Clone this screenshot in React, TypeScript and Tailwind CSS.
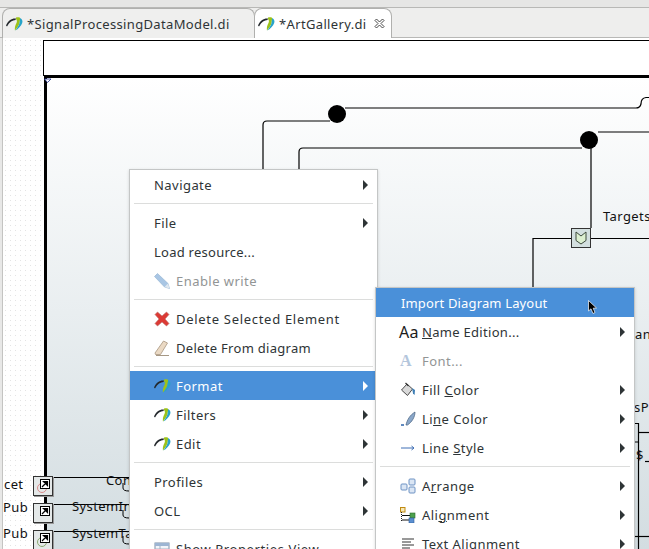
import React from 'react';

const PapyrusLogo = ({ className = '' }: { className?: string }) => (
  <svg viewBox="0 0 17 14" className={className}>
    <path d="M0 8.500 C2 3.500 6 1 10 1.500 L9.500 3 C6.500 3 3.500 5 1 9.500 Z" fill="#23282c" />
    <path d="M10 0.600 C12 -0.200 14 0.100 14.200 1 L13.500 6 C12.800 9 10.800 11 9 13.600 C8.400 11 9.400 8 10.500 6 C11.200 4.500 11 3 10 2 Z" fill="#9cc21a" />
    <path d="M14.200 1 C16.200 2 16.900 4 16.200 6 C15.200 9 12.200 12 9.300 13.600 C11 11 13 8.500 13.500 6 Z" fill="#27a3c9" />
  </svg>
);

const SubArrow = ({ white }: { white?: boolean }) => (
  <svg viewBox="0 0 5 10" className="w-[5px] h-[10px] shrink-0 -mt-[2px]">
    <path d="M0 0 L5 5 L0 10 Z" fill={white ? '#ffffff' : '#2e3436'} />
  </svg>
);

const icons: Record<string, React.ReactNode> = {
  pencil: (
    <svg viewBox="0 0 16 16" className="w-4 h-4">
      <path d="M0.500 3.500 L3.500 0.500 L14 10.500 L15.500 15.500 L10.500 14 Z" fill="#a9c6e4" stroke="#8fb0d0" strokeWidth="0.6" />
      <path d="M10.500 14 L15.500 15.500 L14 10.500 Z" fill="#dfe7ef" />
    </svg>
  ),
  cross: (
    <svg viewBox="0 0 16 16" className="w-4 h-4">
      <path d="M1 3.500 L3.500 1 L8 5 L12.500 1 L15 3.500 L11 8 L15 12.500 L12.500 15 L8 11 L3.500 15 L1 12.500 L5 8 Z" fill="#dc3a35" stroke="#b9706c" strokeWidth="0.6" />
    </svg>
  ),
  eraser: (
    <svg viewBox="0 0 16 16" className="w-4 h-4">
      <path d="M1 13 L9.500 1 L13.500 3 L6.500 14.500 L1.500 14.500 Z" fill="#ead9c4" stroke="#a8957f" strokeWidth="0.8" />
      <path d="M2 15.500 L15 15.500" stroke="#8f7d66" strokeWidth="0.8" />
    </svg>
  ),
  aa: <span className="text-[16px] leading-none text-[#1c1c1c] -ml-[1px]">Aa</span>,
  font: <span className="font-['Liberation_Serif',serif] font-bold text-[16px] leading-none text-[#b4c6dc]">A</span>,
  fill: (
    <svg viewBox="0 0 16 16" className="w-4 h-4">
      <path d="M1.500 8 L7 2 L12.500 7 L7.500 13.500 Z" fill="#d9d9d9" stroke="#4a4a4a" strokeWidth="1" />
      <path d="M5.500 1 L8.500 4" stroke="#333" strokeWidth="1.2" />
      <path d="M12 6 L15 8 L14.600 13 L13 11.500 Z" fill="#3f7fb5" />
    </svg>
  ),
  line: (
    <svg viewBox="0 0 17 16" className="w-[17px] h-4">
      <path d="M1 14 L4 14" stroke="#3a6db0" strokeWidth="1.6" />
      <path d="M6 14 C7 9 10 4 15 1 C15 6 12 11 7.500 14 Z" fill="#8aa7c9" stroke="#47617f" strokeWidth="0.7" />
    </svg>
  ),
  arrow: (
    <svg viewBox="0 0 16 16" className="w-4 h-4">
      <path d="M1 8 L14 8 M11.500 6 L14 8 L11.500 10" stroke="#3f6fb5" strokeWidth="1" fill="none" />
    </svg>
  ),
  arrange: (
    <svg viewBox="0 0 16 16" className="w-4 h-4">
      <rect x="1" y="6" width="6" height="6" rx="1" fill="#dbe6f4" stroke="#6e93c4" />
      <rect x="9" y="1" width="6" height="6" rx="1" fill="#dbe6f4" stroke="#6e93c4" />
      <rect x="9" y="9" width="6" height="6" rx="1" fill="#dbe6f4" stroke="#6e93c4" />
    </svg>
  ),
  align: (
    <svg viewBox="0 0 16 16" className="w-4 h-4">
      <rect x="0.500" y="0.500" width="4.500" height="4.500" fill="#f7e8b5" stroke="#c08a12" />
      <path d="M1.500 5 L1.500 15" stroke="#222" strokeWidth="1" strokeDasharray="1 1" />
      <path d="M2 8.500 L10 8.500 M2 13 L10 13" stroke="#111" strokeWidth="1" />
      <rect x="10" y="6" width="5" height="5" fill="#4da04d" stroke="#2c6e2c" strokeWidth="0.6" />
      <rect x="9" y="11" width="5" height="5" fill="#5a8fd0" stroke="#2f5f9c" strokeWidth="0.6" />
    </svg>
  ),
  text: (
    <svg viewBox="0 0 16 16" className="w-4 h-4">
      <path d="M2 3 H14 M2 6 H11 M2 9 H14 M2 12 H10 M2 15 H14" stroke="#333" strokeWidth="1" />
    </svg>
  ),
  table: (
    <svg viewBox="0 0 16 16" className="w-4 h-4">
      <rect x="1" y="2" width="14" height="12" fill="#f2f5fa" stroke="#7d8fa8" />
      <rect x="1" y="2" width="14" height="3" fill="#9db5d3" />
      <path d="M1 8 H15 M1 11 H15 M6 5 V14" stroke="#a4b2c4" strokeWidth="1" />
    </svg>
  ),
  logo: <PapyrusLogo className="w-[17px] h-[14px]" />,
};

type MenuItem = {
  label?: React.ReactNode;
  icon?: string;
  sub?: boolean;
  active?: boolean;
  disabled?: boolean;
  sep?: boolean;
  track?: string;
};

const mainMenu: MenuItem[] = [
  { label: 'Navigate', sub: true },
  { sep: true },
  { label: 'File', sub: true },
  { label: 'Load resource...', track: 'tracking-[0.25px]' },
  { label: 'Enable write', icon: 'pencil', disabled: true },
  { sep: true },
  { label: 'Delete Selected Element', icon: 'cross', track: 'tracking-[0.7px]' },
  { label: 'Delete From diagram', icon: 'eraser', track: 'tracking-[0.3px]' },
  { sep: true },
  { label: 'Format', icon: 'logo', sub: true, active: true },
  { label: 'Filters', icon: 'logo', sub: true },
  { label: 'Edit', icon: 'logo', sub: true },
  { sep: true },
  { label: 'Profiles', sub: true },
  { label: 'OCL', sub: true },
  { sep: true },
  { label: 'Show Properties View', icon: 'table', track: 'tracking-[0.6px]' },
];

const subMenu: MenuItem[] = [
  { label: <span className="ml-[1px]">Import Diagram Layout</span>, active: true, track: 'tracking-[0.15px]' },
  { label: <><u>N</u>ame Edition...</>, icon: 'aa', sub: true, track: 'tracking-[0.3px]' },
  { label: 'Font...', icon: 'font', disabled: true },
  { label: <>Fill <u>C</u>olor</>, icon: 'fill', sub: true },
  { label: <>Li<u>n</u>e Color</>, icon: 'line', sub: true },
  { label: <>Line <u>S</u>tyle</>, icon: 'arrow', sub: true },
  { sep: true },
  { label: <>A<u>r</u>range</>, icon: 'arrange', sub: true },
  { label: <>Ali<u>g</u>nment</>, icon: 'align', sub: true },
  { label: 'Text Alignment', icon: 'text', sub: true },
];

function Menu({ items, className }: { items: MenuItem[]; className: string }) {
  return (
    <div className={`absolute bg-white border border-[#c4c6c6] shadow-[0_1px_3px_rgba(0,0,0,0.15)] ${className}`}>
      {items.map((item, i) =>
        item.sep ? (
          <div key={i} className="h-[1px] my-1 mx-[4px] bg-[#dcdddc]" />
        ) : (
          <div
            key={i}
            className={`h-[29px] pt-[2px] flex items-center text-[13px] pl-[24px] pr-[9px] ${item.track ?? 'tracking-[0.45px]'} ${
              item.active ? 'bg-[#4a90d9] text-white' : item.disabled ? 'text-[#929595]' : 'text-[#2e3436]'
            }`}
          >
            {item.icon && <span className="w-[22px] flex items-center shrink-0 -mt-[2px]">{icons[item.icon]}</span>}
            <span className="flex-1 whitespace-nowrap">{item.label}</span>
            {item.sub && <SubArrow white={item.active} />}
          </div>
        )
      )}
    </div>
  );
}

function Tab({ label, active }: { label: string; active?: boolean }) {
  return (
    <div
      className={`flex items-center gap-[4px] h-[30px] border-t border-l border-r border-[#b0b0ae] rounded-t-[8px] ${
        active ? 'w-[138px] pl-[3px] pr-[6px] bg-white -ml-[1px]' : 'w-[253px] pl-[3px] bg-[#efefee]'
      }`}
    >
      <PapyrusLogo className="w-[17px] h-[14px] shrink-0" />
      <span className="text-[13px] tracking-[0.35px] pt-[2px] text-[#2e3436] whitespace-nowrap">{label}</span>
      {active && (
        <svg viewBox="0 0 11 11" className="w-[11px] h-[11px] ml-auto shrink-0">
          <path d="M1 2.500 L2.500 1 L5.500 4 L8.500 1 L10 2.500 L7 5.500 L10 8.500 L8.500 10 L5.500 7 L2.500 10 L1 8.500 L4 5.500 Z" fill="#fff" stroke="#333" strokeWidth="0.9" />
        </svg>
      )}
    </div>
  );
}

// small shortcut marker on the left edge of the diagram
const PortBox = ({ top, tint }: { top: number; tint?: string }) => (
  <div className="absolute left-[33px] w-[20px] h-[20px] bg-[#e4e8e8] border border-[#333] shadow-[1px_1px_0_#999]" style={{ top }}>
    <svg viewBox="0 0 18 18" className="w-[18px] h-[18px]">
      {tint && <circle cx="8" cy="11" r="4.500" fill="none" stroke={tint} strokeWidth="1" />}
      <rect x="6.500" y="2.500" width="9" height="9" fill="#fff" stroke="#000" />
      <path d="M8 10 L11.500 6.500 M9.500 4.500 L13.500 4.500 L13.500 8.500 Z" stroke="#000" strokeWidth="1.200" fill="#000" />
    </svg>
  </div>
);

export default function App() {
  return (
    <div className="relative w-[649px] h-[549px] overflow-hidden flex flex-col bg-[#e8e8e7] font-['Noto_Sans',sans-serif]">
      {/* editor tabs */}
      <div className="h-[7px] bg-[#e6e6e5] shrink-0" />
      <div className="h-[31px] shrink-0 flex pl-[2px] bg-[#eeeeed] border-t border-b border-[#b8b8b6]">
        <Tab label="*SignalProcessingDataModel.di" />
        <Tab label="*ArtGallery.di" active />
      </div>

      {/* diagram canvas */}
      <div className="relative flex-1 ml-[2px] border-l border-[#c4c4c2] bg-white bg-[radial-gradient(#e4e4e4_0.6px,transparent_0.8px)] bg-[size:5px_5px]">
        <div className="absolute left-[40px] top-[2px] right-0 h-[36px] bg-white border-t border-l border-black" />
        <div className="absolute left-[41px] top-[37px] right-0 bottom-0 border-t-[3px] border-l-[3px] border-black bg-gradient-to-b from-white to-[#d3dde1]" />
      </div>

      {/* connectors, in page coordinates */}
      <svg className="absolute inset-0 w-[649px] h-[549px]" viewBox="0 0 649 549" fill="none" stroke="#000" strokeWidth="1.2">
        <path d="M44.500 79 L51 79 L47.500 82.500 Z" fill="#fff" stroke="#1c2b8a" strokeWidth="0.8" />
        <path d="M263 172 V125 Q263 121 267 121 H330" />
        <path d="M345 108 H636 Q640 108 641 104 Q641 98 646 97.500 H649" />
        <path d="M299 172 V152 Q299 148 303 148 H582" />
        <path d="M598 132 H649" />
        <path d="M591 148 V228" />
        <path d="M533 290 V238.500 H572" />
        <path d="M591 238.500 H649" />
        <circle cx="337" cy="114" r="9" fill="#000" stroke="none" />
        <circle cx="589" cy="140" r="9" fill="#000" stroke="none" />
        <path d="M52 477.500 H130 M52 504.500 H130 M52 531.500 H130" />
        <path d="M123 483 V488 Q123 491 129 491 M123 510 V515 Q123 518 129 518 M123 536 V541 Q123 544 129 544" strokeWidth="1" />
        <path d="M635 423.500 H638.500 V442 H635" />
        <path d="M638 432.500 H649" />
        <path d="M638.500 442 V549" />
        <path d="M645 461.500 H649" />
        <path d="M635 536.500 H649" />
      </svg>

      {/* port markers */}
      <div className="absolute left-[571px] top-[228px] w-[20px] h-[20px] bg-[#d3dfdf] border border-[#333] flex items-center justify-center">
        <svg viewBox="0 0 12 14" className="w-3 h-[14px]">
          <path d="M1 1 L6 5 L11 1 V9.500 L6 13 L1 9.500 Z" fill="#dcefd0" stroke="#3d4a3d" strokeWidth="1" />
        </svg>
      </div>
      <PortBox top={476} tint="#d98a8a" />
      <PortBox top={503} />
      <PortBox top={530} tint="#8aa870" />

      <div className="absolute inset-0 text-[13px] tracking-[0.4px] text-[#111] leading-none">
        <span className="absolute left-[603px] top-[210px] whitespace-nowrap">Targets</span>
        <span className="absolute left-[635px] top-[328px] whitespace-nowrap">ana</span>
        <span className="absolute left-[634px] top-[401px] whitespace-nowrap">sPu</span>
        <span className="absolute left-[636px] top-[449px]">$</span>
        <span className="absolute left-[4px] top-[478px]">cet</span>
        <span className="absolute left-[3px] top-[501px]">Pub</span>
        <span className="absolute left-[3px] top-[527px]">Pub</span>
        <span className="absolute left-[106px] top-[474px]">Con</span>
        <span className="absolute left-[72px] top-[500px] whitespace-nowrap">SystemIn</span>
        <span className="absolute left-[72px] top-[527px] whitespace-nowrap">SystemTa</span>
      </div>

      {/* context menus */}
      <Menu items={mainMenu} className="left-[129px] top-[169px] w-[249px]" />
      <Menu items={subMenu} className="left-[375px] top-[287px] w-[260px]" />

      {/* pointer */}
      <svg viewBox="0 0 10 15" className="absolute left-[588px] top-[300px] w-[10px] h-[15px]">
        <path d="M0.500 0.500 L0.500 11 L3 8.800 L5 13.500 L7 12.500 L5.200 8.200 L8.500 8 Z" fill="#000" stroke="#fff" strokeWidth="0.7" />
      </svg>
    </div>
  );
}
